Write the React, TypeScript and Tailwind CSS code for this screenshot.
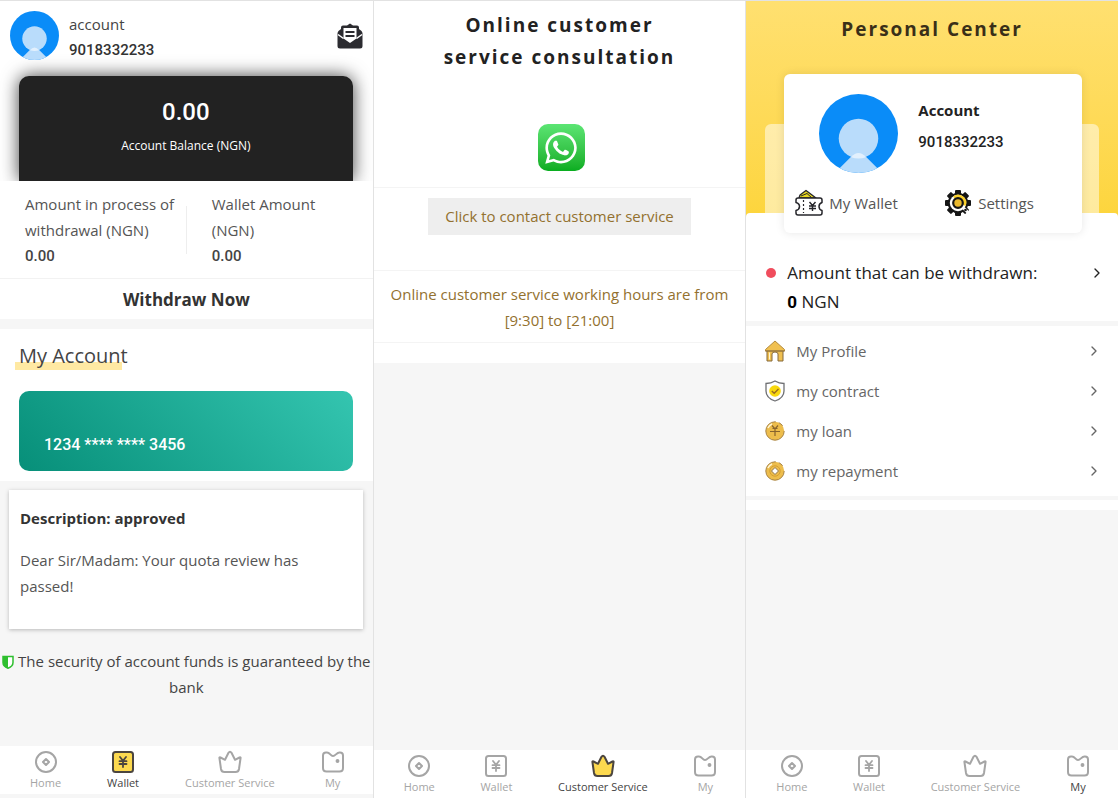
import type { ReactNode } from "react";
import { ChevronRight } from "lucide-react";
import { FaWhatsapp } from "react-icons/fa";

type TabId = "home" | "wallet" | "service" | "my";

// ===== icons =====
function Avatar({ className }: { className: string }) {
  return (
    <svg viewBox="0 0 80 80" className={className} role="img" aria-label="Avatar">
      <defs>
        <clipPath id="avatar-clip">
          <circle cx="40" cy="40" r="40" />
        </clipPath>
      </defs>
      <g clipPath="url(#avatar-clip)">
        <rect width="80" height="80" fill="#0a8cf8" />
        <circle cx="40" cy="45" r="20" fill="#b9dcfb" />
        <path d="M16 80 L34 62 Q40 57 46 62 L64 80Z" fill="#b9dcfb" />
        <path d="M32.500 64 Q40 55.500 47.500 64 Q40 66.500 32.500 64Z" fill="#e2f0fd" />
      </g>
    </svg>
  );
}

function MailIcon() {
  return (
    <svg viewBox="0 0 26 26" className="h-[26px] w-[26px]" aria-hidden>
      <path
        fill="#2b2b30"
        d="M10 2.500 L13 0.500 L16 2.500 H20 Q22 2.500 22 4.500 V6 L24.500 8 Q25.500 9 25.500 10.500 V23 Q25.500 25.500 23 25.500 H3 Q0.500 25.500 0.500 23 V10.500 Q0.500 9 1.500 8 L4 6 V4.500 Q4 2.500 6 2.500Z"
      />
      <path fill="#fff" d="M6.500 5 H19.500 V15.500 L13 20 L6.500 15.500Z" />
      <path fill="none" stroke="#fff" strokeWidth="1.500" d="M1 11.500 L6.500 15.500 M19.500 15.500 L25 11.500" />
      <path stroke="#2b2b30" strokeWidth="1.800" d="M8.500 9 H17.500 M8.500 13 H17.500" />
    </svg>
  );
}

function ShieldHalf() {
  return (
    <svg viewBox="0 0 12 14" className="mr-1 inline h-[14px] w-3 align-[-2px]" aria-hidden>
      <path fill="#fff" stroke="#2fbf2f" strokeWidth="1.500" d="M1 1.500 H11 V7.500 Q11 11.500 6 13.200 Q1 11.500 1 7.500Z" />
      <path fill="#2fbf2f" d="M1 1.500 H6 V13.200 Q1 11.500 1 7.500Z" />
    </svg>
  );
}

function TabIcon({ id, active }: { id: TabId; active: boolean }) {
  const filled = active && id !== "my";
  const stroke = filled ? "#4b453f" : "#a5a5a5";
  const fill = filled ? "#fcd94f" : "none";
  return (
    <svg
      viewBox="0 0 24 24"
      className="h-6 w-6"
      fill={fill}
      stroke={stroke}
      strokeWidth="2"
      strokeLinecap="round"
      strokeLinejoin="round"
      aria-hidden
    >
      {id === "home" && (
        <>
          <circle cx="12" cy="12" r="10" />
          <path d="M12 9 L15 12 L12 15 L9 12Z" />
        </>
      )}
      {id === "wallet" && (
        <>
          <rect x="2" y="2" width="20" height="20" rx="2.500" />
          <path fill="none" strokeWidth="1.800" d="M9 7 L12 10.800 L15 7 M8.500 11.200 H15.500 M8.500 14 H15.500 M12 11 V17" />
        </>
      )}
      {id === "service" && (
        <path d="M1.500 8.500 Q1 6.800 2.500 7.500 L7 9.800 L10.500 2.800 Q12 0.600 13.500 2.800 L17 9.800 L21.500 7.500 Q23 6.800 22.500 8.500 L21 19 Q20.500 22 17.500 22 H6.500 Q3.500 22 3 19Z" />
      )}
      {id === "my" && (
        <>
          <path d="M5 2.500 H6 C9 2.500 9.500 6 12 6 S15.500 2.500 18.500 2.500 H19 Q22 2.500 22 5.500 V18 Q22 21.500 18.500 21.500 H5.500 Q2 21.500 2 18 V5.500 Q2 2.500 5 2.500Z" />
          <circle cx="16.500" cy="11" r="1.200" fill={stroke} strokeWidth="1.500" />
        </>
      )}
    </svg>
  );
}

function TicketIcon() {
  return (
    <svg viewBox="0 0 28 28" className="h-7 w-7" fill="none" stroke="#26262b" strokeWidth="1.500" strokeLinejoin="round" aria-hidden>
      <path d="M4 9 L5 6 L11 1.500 L21 9Z" fill="#e9d81f" strokeWidth="1.300" />
      <path d="M6 7 L12 4.500 L17 9" strokeWidth="1" />
      <path
        fill="#fff"
        d="M3 9 H25 Q27 9 27 11 V13.500 Q24 14.500 24 17.500 T27 21.500 V24 Q27 26 25 26 H3 Q1 26 1 24 V21.500 Q4.500 20.500 4.500 17.500 T1 13.500 V11 Q1 9 3 9Z"
      />
      <path d="M8.500 11 V24" strokeDasharray="2 2" strokeWidth="1.200" />
      <path d="M14.500 13 L17.500 16.500 L20.500 13 M14 17 H21 M14 19.500 H21 M17.500 16.500 V22" strokeWidth="1.400" />
    </svg>
  );
}

function GearIcon() {
  const angles = [0, 45, 90, 135, 180, 225, 270, 315];
  return (
    <svg viewBox="0 0 28 28" className="h-7 w-7" aria-hidden>
      {angles.map((a) => (
        <rect key={a} x="11" y="1" width="6" height="6" rx="1" fill="#151515" transform={`rotate(${a} 14 14)`} />
      ))}
      <circle cx="14" cy="14" r="10.300" fill="#151515" />
      <circle cx="14" cy="14" r="8.200" fill="#fff" />
      <path d="M9 7.500 A8.200 8.200 0 0 1 21.700 17 L14 14Z" fill="#fad02c" />
      <circle cx="14" cy="14" r="4.800" fill="#e9b82e" stroke="#151515" strokeWidth="2.200" />
      <path d="M19.500 19 L24 23.500" stroke="#fff" strokeWidth="3" />
      <circle cx="21.500" cy="21" r="1.300" fill="#151515" />
    </svg>
  );
}

function HouseIcon() {
  return (
    <svg viewBox="0 0 20 22" className="h-[22px] w-5" fill="#f0c050" stroke="#85693a" strokeLinejoin="round" aria-hidden>
      <path d="M2 10 H18 V21 H13 V14 Q13 12 10 12 T7 14 V21 H2Z" />
      <path d="M10 1 L19.500 9.500 V11 H0.500 V9.500Z" stroke="#b48b3e" />
      <path d="M0.500 11 H19.500" />
      <path d="M4.500 12.500 V19.500" stroke="#fff3cc" />
    </svg>
  );
}

function ContractIcon() {
  return (
    <svg viewBox="0 0 20 22" className="h-[22px] w-5" fill="none" aria-hidden>
      <path
        d="M10 1 Q14 3.500 19 3.500 V11 Q19 18 10 21 Q1 18 1 11 V3.500 Q6 3.500 10 1Z"
        fill="#fff"
        stroke="#6f7073"
        strokeWidth="1.300"
      />
      <circle cx="10" cy="11" r="5.800" fill="#f8d80d" />
      <path d="M6.800 11 L9.200 13.300 L13.500 9" stroke="#9b6b20" strokeWidth="1.400" />
    </svg>
  );
}

function CoinIcon({ hole }: { hole?: boolean }) {
  return (
    <svg viewBox="0 0 20 20" className="h-5 w-5" fill="none" aria-hidden>
      <circle cx="10" cy="10" r="9.200" fill="#edbd4c" stroke="#a78345" strokeDasharray="44 3 5 6" />
      <path d="M3 7 A7.500 7.500 0 0 1 7 3" stroke="#fff5d4" strokeWidth="1.500" />
      {hole ? (
        <>
          <circle cx="10" cy="10" r="5.200" stroke="#d69f31" />
          <path d="M10 6.500 L13.500 10 L10 13.500 L6.500 10Z" fill="#fff" stroke="#8d7350" />
        </>
      ) : (
        <path d="M7 4.500 L10 8 L13 4.500 M7.500 7.500 H12.500 M5 10.500 H15 M10 8 V15" stroke="#87632d" strokeWidth="1.200" />
      )}
    </svg>
  );
}

// ===== shared pieces =====
const tabs: { id: TabId; label: string }[] = [
  { id: "home", label: "Home" },
  { id: "wallet", label: "Wallet" },
  { id: "service", label: "Customer Service" },
  { id: "my", label: "My" },
];

function TabBar({ active }: { active: TabId }) {
  return (
    <nav className="mt-auto flex h-12 justify-between bg-white pt-1 pr-7 pl-[30px]">
      {tabs.map((tab) => (
        <a
          key={tab.id}
          href={`#${tab.id}`}
          className={`flex flex-col items-center text-[11px] leading-[18px] ${
            tab.id === active ? "text-[#444]" : "text-[#a5a5a5]"
          }`}
        >
          <TabIcon id={tab.id} active={tab.id === active} />
          {tab.label}
        </a>
      ))}
    </nav>
  );
}

function Screen({ children }: { children: ReactNode }) {
  return (
    <section className="flex min-w-0 flex-col border-t border-l border-[#e2e2e2] bg-[#f6f6f6] first:border-l-0">
      {children}
    </section>
  );
}

// ===== screens =====
function Amount({ label, value }: { label: string; value: string }) {
  return (
    <div className="w-1/2 pr-[10px] pl-[25px] text-[15px] leading-[26px] text-[#555] last:pr-12">
      <p>{label}</p>
      <p className="font-[Roboto] font-medium text-[#444]">{value}</p>
    </div>
  );
}

function WalletScreen() {
  return (
    <Screen>
      <div className="overflow-hidden bg-white">
        <header className="flex h-[75px] items-start px-[10px] pt-[10px]">
          <Avatar className="h-[49px] w-[49px]" />
          <div className="ml-[10px] flex-1">
            <p className="text-[15px] leading-[26px] text-[#444]">account</p>
            <p className="font-[Roboto] text-[15px] leading-[26px] font-medium text-[#333]">9018332233</p>
          </div>
          <button type="button" aria-label="Messages" className="mt-3">
            <MailIcon />
          </button>
        </header>
        <div className="mr-5 ml-[19px] h-[105px] rounded-t-[10px] bg-[#222] pt-5 text-center text-white shadow-[0_0_18px_rgba(0,0,0,0.75)]">
          <p className="font-[Roboto] text-2xl leading-8 font-medium">0.00</p>
          <p className="mt-2 text-xs leading-5">Account Balance (NGN)</p>
        </div>
      </div>

      <div className="flex items-center border-b border-[#f2f2f2] bg-white pt-[10px] pb-[9px]">
        <Amount label="Amount in process of withdrawal (NGN)" value="0.00" />
        <div className="h-12 w-px shrink-0 bg-[#eee]" />
        <Amount label="Wallet Amount (NGN)" value="0.00" />
      </div>
      <button type="button" className="h-10 bg-white pt-[2px] text-[17px] font-bold text-[#333]">
        Withdraw Now
      </button>

      <div className="mt-[10px] bg-white pt-[13px] pr-5 pb-[10px] pl-[19px]">
        <h2 className="relative isolate text-xl leading-7 font-medium text-[#444]">
          <span className="absolute top-5 -left-1 -z-10 h-2 w-[107px] bg-[#ffe9a3]" />
          My Account
        </h2>
        <div className="mt-[21px] flex h-20 items-end rounded-[10px] bg-linear-[45deg] from-[#078f79] to-[#34c5b0] px-[25px] pb-[14px]">
          <p className="font-[Roboto] text-base leading-6 font-medium text-white">1234 **** **** 3456</p>
        </div>
      </div>

      <article className="mr-[10px] ml-[9px] mt-[9px] h-[139px] bg-white px-[11px] pt-[15px] text-[15px] leading-[26px] text-[#555] shadow-[0_1px_4px_rgba(0,0,0,0.25)]">
        <h3 className="font-bold text-[#333]">Description: approved</h3>
        <p className="mt-4">Dear Sir/Madam: Your quota review has passed!</p>
      </article>

      <p className="mt-[19px] text-center text-[15px] leading-[26px] text-[#444]">
        <ShieldHalf />
        The security of account funds is guaranteed by the bank
      </p>

      <TabBar active="wallet" />
      <div className="h-1" />
    </Screen>
  );
}

function ServiceScreen() {
  return (
    <Screen>
      <div className="flex flex-col bg-white pb-5 text-center">
        <h1 className="mx-auto max-w-[260px] pt-2 text-[19px] leading-8 font-bold tracking-[2px] text-[#222]">
          Online customer service consultation
        </h1>
        <div className="mt-[51px] flex justify-center border-b border-[#f4f4f4] pb-4 pl-1">
          <span className="flex h-[47px] w-[47px] items-center justify-center rounded-[10px] bg-linear-to-b from-[#5be573] to-[#08ad1f] text-white">
            <FaWhatsapp className="h-9 w-9" />
          </span>
        </div>
        <div className="border-b border-[#f4f4f4] pt-[10px] pb-[35px]">
          <button type="button" className="h-[37px] bg-[#eee] px-[17px] text-[15px] text-[#93712f]">
            Click to contact customer service
          </button>
        </div>
        <p className="border-b border-[#f4f4f4] px-4 pt-[10px] pb-[9px] text-[15px] leading-[26px] text-[#93712f]">
          Online customer service working hours are from [9:30] to [21:00]
        </p>
      </div>
      <TabBar active="service" />
    </Screen>
  );
}

function PersonalScreen() {
  const menu = [
    { label: "My Profile", icon: <HouseIcon /> },
    { label: "my contract", icon: <ContractIcon /> },
    { label: "my loan", icon: <CoinIcon /> },
    { label: "my repayment", icon: <CoinIcon hole /> },
  ];

  return (
    <Screen>
      <header className="relative bg-linear-to-b from-[#ffe070] to-[#fdd53c] pt-3">
        <h1 className="text-center text-[19px] leading-8 font-bold tracking-[2px] text-[#3a2f18]">Personal Center</h1>
        {/* translucent layer and rounded sheet behind the profile card */}
        <div className="absolute inset-x-[19px] bottom-0 h-[93px] rounded-t-md bg-white/50" />
        <div className="absolute inset-x-0 bottom-0 h-1 rounded-t-md bg-white" />
        <div className="relative mr-9 ml-[38px] mt-[29px] -mb-4 h-[159px] rounded-md bg-white pt-5 shadow-[0_0_10px_rgba(0,0,0,0.1)]">
          <div className="flex pl-[35px]">
            <Avatar className="h-[79px] w-[79px]" />
            <div className="ml-5 pt-[3px] text-[#222]">
              <p className="text-[15px] leading-[26px] font-bold">Account</p>
              <p className="mt-[6px] font-[Roboto] text-[15px] leading-[26px] font-medium">9018332233</p>
            </div>
          </div>
          <div className="mt-4 grid grid-cols-2 text-[15px] text-[#555]">
            <a href="#wallet" className="flex items-center gap-[6px] pl-[11px]">
              <TicketIcon />
              My Wallet
            </a>
            <a href="#settings" className="flex items-center gap-[6px] pl-[11px]">
              <GearIcon />
              Settings
            </a>
          </div>
        </div>
      </header>

      <a href="#withdraw" className="flex items-start bg-white pt-[41px] pr-[13px] pb-1 pl-5 text-[17px] leading-[29px] text-[#222]">
        <span className="mt-[10px] mr-[11px] h-[10px] w-[10px] rounded-full bg-[#f04d5d]" />
        <span className="flex-1">
          Amount that can be withdrawn:
          <br />
          <b className="font-[Roboto] text-black">0</b> NGN
        </span>
        <ChevronRight className="mt-[7px] h-4 w-4" strokeWidth={2} />
      </a>

      <ul className="mt-[5px] bg-white pt-[5px] pb-[5px]">
        {menu.map((m) => (
          <li key={m.label}>
            <a href="#menu" className="flex h-10 items-center pr-4 pl-[19px] text-[15px] text-[#666]">
              {m.icon}
              <span className="ml-[11px] flex-1">{m.label}</span>
              <ChevronRight className="h-4 w-4" strokeWidth={2} />
            </a>
          </li>
        ))}
      </ul>
      <div className="mt-1 h-[10px] bg-white" />
      <TabBar active="my" />
    </Screen>
  );
}

export default function App() {
  return (
    <main className="grid min-h-screen grid-cols-3 font-['Open_Sans','Noto_Sans',sans-serif]">
      <WalletScreen />
      <ServiceScreen />
      <PersonalScreen />
    </main>
  );
}
